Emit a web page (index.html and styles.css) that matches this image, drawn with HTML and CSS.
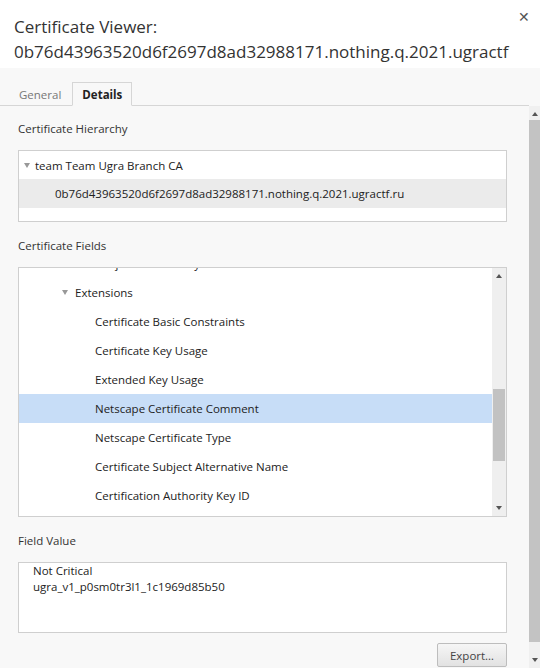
FILE: index.html
```html
<!DOCTYPE html>
<html>
<head>
<meta charset="utf-8">
<link rel="stylesheet" href="styles.css">
</head>
<body>
<div class="dialog">
  <div class="header">
    <h1 class="title">Certificate Viewer:<br>0b76d43963520d6f2697d8ad32988171.nothing.q.2021.ugractf</h1>
    <span class="close">✕</span>
  </div>
  <div class="tabs">
    <span class="tab">General</span>
    <span class="tab active">Details</span>
  </div>
  <div class="main">
    <div class="content">
      <div class="label">Certificate Hierarchy</div>
      <div class="box hier">
        <div class="row"><span class="tri"></span>team Team Ugra Branch CA</div>
        <div class="row sel l2">0b76d43963520d6f2697d8ad32988171.nothing.q.2021.ugractf.ru</div>
      </div>
      <div class="label">Certificate Fields</div>
      <div class="box fields">
        <div class="tree">
          <div class="list">
            <div class="row l3">Subject's Public Key</div>
            <div class="row l2x"><span class="tri"></span>Extensions</div>
            <div class="row l3">Certificate Basic Constraints</div>
            <div class="row l3">Certificate Key Usage</div>
            <div class="row l3">Extended Key Usage</div>
            <div class="row l3 hl">Netscape Certificate Comment</div>
            <div class="row l3">Netscape Certificate Type</div>
            <div class="row l3">Certificate Subject Alternative Name</div>
            <div class="row l3">Certification Authority Key ID</div>
          </div>
        </div>
        <div class="sbar">
          <span class="arr up"></span>
          <div class="strack"><div class="sthumb"></div></div>
          <span class="arr down"></span>
        </div>
      </div>
      <div class="label">Field Value</div>
      <div class="box value">Not Critical<br>ugra_v1_p0sm0tr3l1_1c1969d85b50</div>
      <div class="actions"><button class="btn">Export…</button></div>
    </div>
    <div class="osbar">
      <span class="arr up"></span>
      <div class="otrack"><div class="othumb"></div></div>
      <span class="arr down"></span>
    </div>
  </div>
</div>
</body>
</html>
```

FILE: styles.css
```css
* { box-sizing: border-box; }
html, body { margin: 0; padding: 0; }
body {
  width: 540px; height: 668px; overflow: hidden;
  font-family: "Open Sans", "Noto Sans", sans-serif;
  color: #222;
  background: #f8f8f8;
}
.dialog { display: flex; flex-direction: column; height: 668px; }
.header {
  background: #fff;
  height: 68px;
  display: flex;
  justify-content: space-between;
  padding: 14px 10px 0 14px;
}
.title {
  margin: 0;
  font-weight: 400;
  font-size: 17px;
  line-height: 25px;
  color: #333;
  letter-spacing: 0;
}
.close { font-size: 14px; color: #555; line-height: 1; margin-top: -4px; }
.tabs {
  display: flex;
  align-items: flex-end;
  height: 38px;
  padding: 14px 0 0 9px;
  border-bottom: 1px solid #d6d6d6;
  margin-right: 11px;
}
.tab {
  font-size: 11.5px;
  color: #777;
  padding: 0 9px;
  height: 24px;
  line-height: 23px;
  margin-bottom: -1px;
  border: 1px solid transparent;
}
.tab.active {
  color: #222; font-weight: 700;
  border-color: #d6d6d6; border-bottom-color: #f8f8f8;
  background: #f8f8f8;
  margin-left: 1px;
}
.main { flex: 1; display: flex; min-height: 0; }
.content { flex: 1; padding: 14px 22px 0 18px; overflow: hidden; }
.label { font-size: 11.5px; line-height: 18px; color: #333; margin-bottom: 12px; }
.box { background: #fff; border: 1px solid #cfcfcf; }
.row { height: 29px; line-height: 29px; font-size: 11.5px; white-space: nowrap; display: flex; align-items: center; }
.tri {
  width: 0; height: 0;
  border-left: 3.5px solid transparent; border-right: 3.5px solid transparent;
  border-top: 5px solid #999;
  margin-right: 5px;
}
.hier { height: 72px; margin-bottom: 15px; }
.hier .row:first-child { height: 28px; padding-left: 5px; }
.sel { background: #ebebeb; }
.l2 { padding-left: 36px; }
.fields { height: 250px; margin-bottom: 15px; display: flex; overflow: hidden; }
.tree { flex: 1; overflow: hidden; }
.list { margin-top: -19px; }
.l2x { padding-left: 43px; }
.l2x .tri { margin-right: 7px; }
.l3 { padding-left: 76px; }
.hl { background: #c7ddf7; }
.sbar { width: 14px; background: #efefef; display: flex; flex-direction: column; align-items: center; padding: 0 1px; }
.arr { width: 0; height: 0; border-left: 3.5px solid transparent; border-right: 3.5px solid transparent; flex: none; }
.arr.up { border-bottom: 4px solid #555; margin: 6px 0 4px; }
.arr.down { border-top: 4px solid #555; margin: 4px 0 6px; }
.strack { flex: 1; width: 100%; display: flex; flex-direction: column; }
.sthumb { margin-top: 107px; height: 72px; background: #c2c2c2; }
.value {
  height: 71px; font-size: 11.5px; line-height: 15.5px;
  padding: 0 14px;
  margin-bottom: 10px;
}
.actions { display: flex; justify-content: flex-end; }
.btn {
  font-family: inherit;
  font-size: 11.5px;
  color: #444;
  height: 24px;
  width: 70px;
  border: 1px solid #bdbdbd;
  border-radius: 2px;
  background: linear-gradient(#f6f6f6, #e2e2e2);
  padding: 0;
}
.osbar { width: 11px; background: #f0f0f0; display: flex; flex-direction: column; align-items: center; }
.otrack { flex: 1; width: 100%; display: flex; flex-direction: column; }
.othumb { height: 522px; background: #c3c3c3; }
```
